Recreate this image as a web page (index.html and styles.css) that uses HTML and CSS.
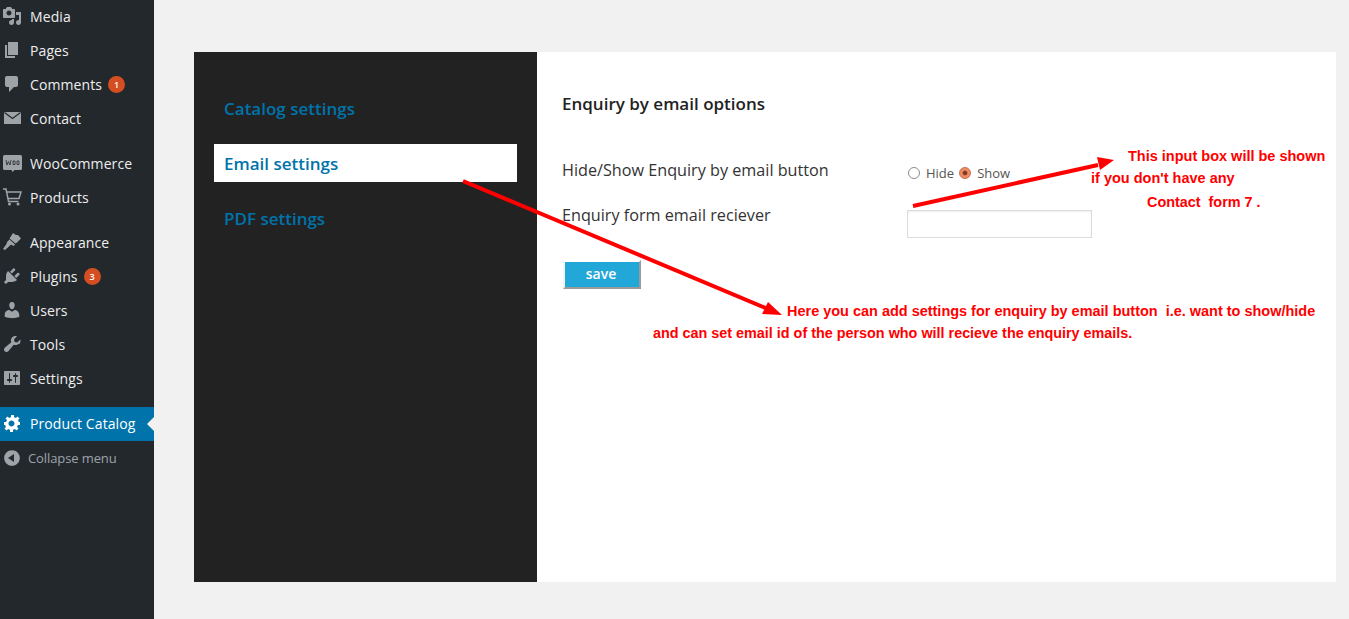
FILE: index.html
```html
<!DOCTYPE html>
<html lang="en">
<head>
    <meta charset="UTF-8">
    <title>Product Catalog</title>
    <link rel="stylesheet" href="styles.css">
</head>
<body>
    <div class="sidebar">
        <ul class="menu">
            <li class="menu-item">
                <svg class="menu-icon" viewBox="0 0 20 20"><path fill-rule="evenodd" d="M13 11V4c0-.55-.45-1-1-1h-1.670L9 1H5L3.670 3H2c-.55 0-1 .45-1 1v7c0 .55.45 1 1 1h10c.55 0 1-.45 1-1zM7 4.500c1.380 0 2.500 1.120 2.500 2.500S8.380 9.500 7 9.500 4.500 8.380 4.500 7 5.620 4.500 7 4.500zM14 6h5v10.500c0 1.380-1.120 2.500-2.500 2.500S14 17.880 14 16.500s1.120-2.500 2.500-2.500c.17 0 .34.020.5.050V9h-3V6zm-4 8.050V13h2v3.500c0 1.380-1.120 2.500-2.500 2.500S7 17.880 7 16.500 8.120 14 9.500 14c.17 0 .34.020.5.050z"/></svg>
                <span>Media</span>
            </li>
            <li class="menu-item">
                <svg class="menu-icon" viewBox="0 0 20 20"><path d="M6 15V2h10v13H6zm-1 1h8v2H3V5h2v11z"/></svg>
                <span>Pages</span>
            </li>
            <li class="menu-item">
                <svg class="menu-icon" viewBox="0 0 20 20"><path d="M5 2h9c1.100 0 2 .9 2 2v7c0 1.100-.9 2-2 2h-2l-5 5v-5H5c-1.100 0-2-.9-2-2V4c0-1.100.9-2 2-2z"/></svg>
                <span>Comments</span><span class="badge">1</span>
            </li>
            <li class="menu-item">
                <svg class="menu-icon" viewBox="0 0 20 20"><path d="M2 4h17v12H2z"/><path class="icon-cut" d="M2.500 4.500l8 6 8-6"/></svg>
                <span>Contact</span>
            </li>
            <li class="menu-item menu-gap">
                <svg class="menu-icon" viewBox="0 0 20 20"><path d="M2.500 2h16a1.500 1.500 0 0 1 1.500 1.500v12a1.500 1.500 0 0 1-1.500 1.500h-6l-2 2-1-2h-7A1.500 1.500 0 0 1 1 15.500v-12A1.500 1.500 0 0 1 2.500 2z"/><path class="icon-cut icon-cut-thin" d="M4 7l1 5 1.400-3.500L8 12l1-5M11 8h2v3.500h-2zM15 8h2v3.500h-2z"/></svg>
                <span>WooCommerce</span>
            </li>
            <li class="menu-item">
                <svg class="menu-icon" viewBox="0 0 20 20"><path class="cart" d="M1 2h3l2.500 12.500h10M4.500 5H19l-2 6.500H6"/><circle cx="7.500" cy="17" r="1.500"/><circle cx="16" cy="17" r="1.500"/></svg>
                <span>Products</span>
            </li>
            <li class="menu-item menu-gap">
                <svg class="menu-icon" viewBox="0 0 20 20"><path d="M11 1l3 2 2 0 3 3.500-4 4-1.500 1-6-5zM7.500 7.500l5.500 5-1.500 1.500-2.500-1.500-1 1L3 18l-2-1 3.500-5 .5-2z"/></svg>
                <span>Appearance</span>
            </li>
            <li class="menu-item">
                <svg class="menu-icon" viewBox="0 0 20 20"><path d="M13.110 4.360L9.870 7.600 8 5.730l3.240-3.240c.35-.34 1.050-.2 1.560.32.52.51.66 1.210.31 1.550zm-8 1.770l.91-1.120 9.010 9.010-1.190.84c-.71.71-2.630 1.160-3.820 1.160H6.140L4.900 17.260c-.59.59-1.540.59-2.120 0-.59-.58-.59-1.530 0-2.120l1.240-1.240v-3.880c0-1.130.4-3.050 1.090-3.890zm7.260 3.970l3.240-3.240c.34-.35 1.040-.21 1.550.31.520.51.66 1.210.31 1.550l-3.240 3.250z"/></svg>
                <span>Plugins</span><span class="badge">3</span>
            </li>
            <li class="menu-item">
                <svg class="menu-icon" viewBox="0 0 20 20"><path d="M10 9.250c-2.270 0-2.730-3.440-2.730-3.440C7 4.020 7.820 2 9.970 2c2.160 0 2.980 2.020 2.710 3.810 0 0-.41 3.440-2.680 3.440zm0 2.570L12.720 10c2.390 0 4.520 2.330 4.520 4.530v2.490s-3.650 1.130-7.240 1.130c-3.650 0-7.240-1.130-7.240-1.130v-2.490c0-2.250 1.940-4.480 4.470-4.480z"/></svg>
                <span>Users</span>
            </li>
            <li class="menu-item">
                <svg class="menu-icon" viewBox="0 0 20 20"><path d="M16.680 9.770c-1.340 1.340-3.300 1.670-4.950.99l-5.410 6.520c-.99.99-2.590.99-3.570 0s-.99-2.590 0-3.570l6.520-5.420c-.68-1.650-.35-3.610.99-4.950 1.280-1.280 3.120-1.640 4.730-1.080l-2.920 2.940.54 2.700 2.690.54 2.940-2.920c.56 1.610.2 3.450-1.080 4.730z"/></svg>
                <span>Tools</span>
            </li>
            <li class="menu-item">
                <svg class="menu-icon" viewBox="0 0 20 20"><path fill-rule="evenodd" d="M18 16V4c0-.55-.45-1-1-1H3c-.55 0-1 .45-1 1v12c0 .55.45 1 1 1h14c.55 0 1-.45 1-1zM8 11h1c.55 0 1 .45 1 1s-.45 1-1 1H8v1.500c0 .28-.22.5-.5.5s-.5-.22-.5-.5V13H6c-.55 0-1-.45-1-1s.45-1 1-1h1V5.500c0-.28.22-.5.5-.5s.5.22.5.5V11zm5-2h-1c-.55 0-1-.45-1-1s.45-1 1-1h1V5.500c0-.28.22-.5.5-.5s.5.22.5.5V7h1c.55 0 1 .45 1 1s-.45 1-1 1h-1v5.500c0 .28-.22.5-.5.5s-.5-.22-.5-.5V9z"/></svg>
                <span>Settings</span>
            </li>
            <li class="menu-item menu-gap menu-current">
                <svg class="menu-icon" viewBox="0 0 20 20"><path fill-rule="evenodd" d="M18 12h-2.180c-.17.7-.44 1.350-.81 1.930l1.540 1.540-2.100 2.100-1.540-1.540c-.58.36-1.230.640-1.910.810V19H8v-2.180c-.68-.17-1.330-.45-1.910-.81l-1.540 1.540-2.120-2.120 1.540-1.540c-.36-.58-.64-1.230-.81-1.910H2V9h2.180c.17-.7.450-1.350.81-1.930L3.450 5.530l2.100-2.100 1.540 1.540c.58-.36 1.230-.64 1.910-.81V2h3v2.180c.68.17 1.330.45 1.910.81l1.540-1.540 2.120 2.120-1.540 1.540c.36.58.64 1.230.81 1.910H18V12zm-8.500 1.500c1.660 0 3-1.340 3-3s-1.340-3-3-3-3 1.340-3 3 1.340 3 3 3z"/></svg>
                <span>Product Catalog</span>
            </li>
            <li class="menu-item menu-collapse">
                <svg class="menu-icon" viewBox="0 0 20 20"><path fill-rule="evenodd" d="M10 2.160c4.330 0 7.840 3.510 7.840 7.840S14.330 17.840 10 17.840 2.160 14.330 2.160 10 5.670 2.160 10 2.160zM12 6l-6 4 6 4V6z"/></svg>
                <span>Collapse menu</span>
            </li>
        </ul>
    </div>

    <div class="main">
        <div class="panel">
            <div class="tabs">
                <div class="tab">Catalog settings</div>
                <div class="tab tab-active">Email settings</div>
                <div class="tab">PDF settings</div>
            </div>
            <div class="options">
                <h3>Enquiry by email options</h3>
                <div class="option-row">
                    <label class="option-label">Hide/Show Enquiry by email button</label>
                    <div class="radios">
                        <span class="radio"></span><span class="radio-text">Hide</span>
                        <span class="radio radio-on"></span><span class="radio-text">Show</span>
                    </div>
                </div>
                <div class="option-row option-row-input">
                    <label class="option-label">Enquiry form email reciever</label>
                    <input class="text-input" type="text">
                </div>
                <button class="save-btn">save</button>
            </div>
        </div>
    </div>

    <svg class="arrows" viewBox="0 0 1349 619">
        <path d="M463 181L768 309" stroke="#ff0000" stroke-width="4" fill="none"/>
        <path d="M782 315L762 314L768 302z" fill="#ff0000"/>
        <path d="M913 206L1098 165" stroke="#ff0000" stroke-width="4" fill="none"/>
        <path d="M1114 160L1097 157L1100 170z" fill="#ff0000"/>
    </svg>
    <div class="note note-show1">This input box will be shown</div>
    <div class="note note-show2">if you don't have any</div>
    <div class="note note-show3">Contact&nbsp; form 7 .</div>
    <div class="note note-here1">Here you can add settings for enquiry by email button&nbsp; i.e. want to show/hide</div>
    <div class="note note-here2">and can set email id of the person who will recieve the enquiry emails.</div>
</body>
</html>
```

FILE: styles.css
```css
html, body {
    height: 100%;
    margin: 0;
    overflow: hidden;
}

body {
    display: flex;
    background: #f1f1f1;
    font-family: "Open Sans", sans-serif;
    color: #222222;
}

.sidebar {
    width: 154px;
    flex-shrink: 0;
    background: #23282d;
}

.menu {
    list-style: none;
    margin: 0;
    padding: 0;
}

.menu-item {
    position: relative;
    display: flex;
    align-items: center;
    box-sizing: border-box;
    height: 34px;
    padding-bottom: 2px;
    font-size: 14px;
    letter-spacing: 0.1px;
    color: #eeeeee;
}

.menu-gap {
    margin-top: 11px;
}

.menu-icon {
    width: 20px;
    height: 20px;
    margin: 0 8px 0 2px;
    flex-shrink: 0;
    fill: #9ea3a8;
}

.icon-cut {
    fill: none;
    stroke: #23282d;
    stroke-width: 1.200;
}

.icon-cut-thin {
    stroke-width: 0.800;
}

.cart {
    fill: none;
    stroke: #9ea3a8;
    stroke-width: 1.500;
}

.badge {
    width: 17px;
    height: 17px;
    margin-left: 6px;
    border-radius: 50%;
    background: #d54e21;
    color: #ffffff;
    font-size: 9px;
    font-weight: 600;
    line-height: 17px;
    text-align: center;
}

.menu-current {
    background: #0073aa;
    color: #ffffff;
}

.menu-current .menu-icon {
    fill: #ffffff;
}

.menu-current::after {
    content: "";
    position: absolute;
    right: 0;
    top: 10px;
    border: 7px solid transparent;
    border-left-width: 0;
    border-right-color: #f1f1f1;
}

.menu-collapse {
    padding-bottom: 0;
    font-size: 13px;
    letter-spacing: -0.1px;
    color: #9ea3a8;
}

.menu-collapse .menu-icon {
    margin-right: 6px;
}

.main {
    flex: 1;
    padding: 52px 13px 37px 40px;
}

.panel {
    display: flex;
    height: 530px;
    background: #ffffff;
}

.tabs {
    width: 343px;
    box-sizing: border-box;
    padding: 37px 20px 0;
    background: #222222;
    flex-shrink: 0;
}

.tab {
    height: 38px;
    margin-bottom: 17px;
    padding-left: 10px;
    font-size: 17px;
    font-weight: 600;
    line-height: 40px;
    color: #0073aa;
}

.tab-active {
    background: #ffffff;
}

.options {
    flex: 1;
    padding: 41px 25px 0;
}

.options h3 {
    margin: 0 0 44px;
    font-size: 17px;
    font-weight: 600;
    line-height: 22px;
    color: #222222;
}

.option-row {
    display: flex;
    align-items: flex-start;
    height: 45px;
}

.option-row-input {
    height: 56px;
}

.option-label {
    width: 345px;
    font-size: 16.200px;
    line-height: 22px;
    color: #333333;
    flex-shrink: 0;
}

.radios {
    display: flex;
    align-items: center;
    height: 22px;
    margin-top: 3px;
    padding-left: 1px;
    font-size: 13px;
    color: #555555;
}

.radio {
    width: 10px;
    height: 10px;
    border: 1px solid #8c8c8c;
    border-radius: 50%;
    background: #ffffff;
}

.radio-on {
    border-color: #c9704e;
    background: radial-gradient(circle, #7a3a20 0, #7a3a20 1.500px, #f08a62 3px);
}

.radio-text {
    margin: 0 5px 0 6px;
}

.text-input {
    width: 185px;
    height: 28px;
    box-sizing: border-box;
    margin-top: 6px;
    border: 1px solid #dddddd;
    box-shadow: inset 0 1px 2px rgba(0, 0, 0, 0.07);
    background: #ffffff;
}

.save-btn {
    display: block;
    width: 78px;
    height: 29px;
    margin-left: 1px;
    padding: 0 2px 2px 0;
    border: 2px solid;
    border-color: #ffffff #9a9a9a #9a9a9a #f4f4f4;
    background: #22a7d9;
    color: #ffffff;
    font-family: "Open Sans", sans-serif;
    font-size: 14px;
    font-weight: 600;
}

/* annotations drawn on top of the screenshot */
.arrows {
    position: absolute;
    left: 0;
    top: 0;
    width: 1349px;
    height: 619px;
    pointer-events: none;
}

.note {
    position: absolute;
    font-family: "Liberation Sans", sans-serif;
    font-size: 14.500px;
    font-weight: 700;
    line-height: 16px;
    color: #ff0000;
    white-space: nowrap;
}

.note-show1 { left: 1128px; top: 148px; }
.note-show2 { left: 1091px; top: 170px; }
.note-show3 { left: 1147px; top: 194px; font-size: 14.400px; }
.note-here1 { left: 787px; top: 303px; font-size: 14.470px; }
.note-here2 { left: 653px; top: 325px; font-size: 14.380px; }
```
